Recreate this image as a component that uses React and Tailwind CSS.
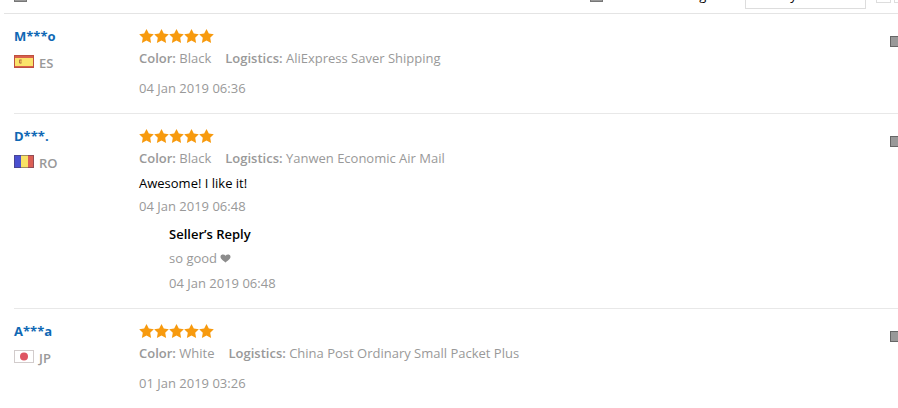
import { ChevronLeft, ChevronRight } from 'lucide-react'

const reviews = [
  {
    name: 'M***o',
    country: 'ES',
    color: 'Black',
    logistics: 'AliExpress Saver Shipping',
    date: '04 Jan 2019 06:36',
  },
  {
    name: 'D***.',
    country: 'RO',
    color: 'Black',
    logistics: 'Yanwen Economic Air Mail',
    comment: 'Awesome! I like it!',
    date: '04 Jan 2019 06:48',
    reply: { text: 'so good', date: '04 Jan 2019 06:48' },
  },
  {
    name: 'A***a',
    country: 'JP',
    color: 'White',
    logistics: 'China Post Ordinary Small Packet Plus',
    date: '01 Jan 2019 03:26',
  },
]

function Flag({ country }) {
  return (
    <svg viewBox="0 0 20 13" className="h-[13px] w-5 shrink-0" aria-hidden="true">
      {country === 'ES' && (
        <>
          <rect width="20" height="13" fill="#d9604c" />
          <rect x="1" y="3" width="18" height="8" fill="#fbe36a" />
          <path d="M5 4.500h3v3l-1.500 1.500L5 7.500z" fill="#e6b85a" />
          <path d="M7.500 5h-2v3h2" fill="none" stroke="#b0633c" strokeWidth="0.8" />
          <rect x="0.5" y="0.5" width="19" height="12" fill="none" stroke="#a3402f" strokeOpacity="0.5" />
        </>
      )}
      {country === 'RO' && (
        <>
          <rect width="7" height="13" fill="#4a50d0" />
          <rect x="7" width="7" height="13" fill="#f8e265" />
          <rect x="14" width="6" height="13" fill="#db5f55" />
          <rect x="0.5" y="0.5" width="19" height="12" fill="none" stroke="#4a3a58" strokeOpacity="0.5" />
        </>
      )}
      {country === 'JP' && (
        <>
          <rect x="0.5" y="0.5" width="19" height="12" fill="#fff" stroke="#d2cccc" />
          <circle cx="10" cy="6.5" r="4" fill="#de5563" />
        </>
      )}
    </svg>
  )
}

function Stars() {
  return (
    <div className="flex h-[22px] items-center" role="img" aria-label="5 out of 5 stars">
      {[1, 2, 3, 4, 5].map((n) => (
        <svg key={n} viewBox="0 0 15 15" className="size-[15px]" fill="#f79a0e">
          <path d="M7.500 0l2.300 4.600 5 .7-3.600 3.500.9 5.100-4.600-2.500-4.600 2.500.9-5.100L.2 5.300l5-.7z" />
        </svg>
      ))}
    </div>
  )
}

function Review({ review }) {
  const { name, country, color, logistics, comment, date, reply } = review

  return (
    <li className="flex border-b border-[#e8e8e8] pt-[11px] pb-[14px] last:border-b-0">
      <div className="w-[125px] shrink-0">
        <a href="#profile" className="block font-bold text-[#0f68b4]">{name}</a>
        <div className="mt-[2px] flex items-center gap-[5px]">
          <Flag country={country} />
          <b className="pt-[3px] font-semibold">{country}</b>
        </div>
      </div>

      <div className="min-w-0 flex-1">
        <Stars />
        <div className="flex gap-[14px]">
          <span><b className="font-semibold">Color:</b> {color}</span>
          <span><b className="font-semibold">Logistics:</b> {logistics}</span>
        </div>
        {comment && <p className="mt-[3px] text-black">{comment}</p>}
        <p className={comment ? 'mt-px' : 'mt-2'}>{date}</p>
        {reply && (
          <div className="mt-[6px] pl-[30px]">
            <h3 className="font-semibold text-black">Seller’s Reply</h3>
            <p className="mt-[2px] flex items-center gap-[3px]">
              {reply.text}
              <svg viewBox="0 0 11 9" className="h-[9px] w-[11px]" fill="#8c8c8c" aria-label="heart">
                <path d="M5.500 8.500C4 7 .5 5.200.5 2.700.5 1.300 1.600.5 2.900.5c1.100 0 2 .4 2.600 1.200C6.100.9 7 .5 8.100.5c1.300 0 2.400.8 2.400 2.200C10.500 5.200 7 7 5.500 8.500z" />
              </svg>
            </p>
            <p className="mt-[3px]">{reply.date}</p>
          </div>
        )}
      </div>

      <button type="button" aria-label="Helpful" className="mt-[11px] -mr-1 h-[11px] w-3 shrink-0 border border-[#666] bg-[#999]" />
    </li>
  )
}

export default function App() {
  return (
    <div className="min-h-screen overflow-hidden bg-white font-['Open_Sans',sans-serif] text-[13px] leading-[22px] text-[#999]">
      <div className="ml-1 flex h-[14px] items-end overflow-hidden border-b border-[#e4e4e4] pb-1 pl-[10px]">
        <div className="flex h-7 flex-1 items-center text-black">
          <input type="checkbox" aria-label="With pictures" className="size-[13px] appearance-none border border-[#777] bg-[#999]" />
          <label className="mr-[18px] ml-auto flex items-center gap-[6px]">
            <input type="checkbox" className="size-[13px] appearance-none border border-[#777] bg-[#999]" />
            Translate to English
          </label>
          <select aria-label="Sort reviews" className="h-7 w-[121px] appearance-none border border-[#ddd] bg-white px-2">
            <option>Sort by default</option>
          </select>
          <button type="button" aria-label="Previous page" className="ml-[10px] flex size-[15px] items-center justify-center border border-[#ddd]">
            <ChevronLeft className="size-2" />
          </button>
          <button type="button" aria-label="Next page" className="-mr-[11px] ml-[3px] flex size-[15px] items-center justify-center border border-[#ddd]">
            <ChevronRight className="size-2" />
          </button>
        </div>
      </div>

      <ul className="pl-[14px]">
        {reviews.map((review) => (
          <Review key={review.name} review={review} />
        ))}
      </ul>
    </div>
  )
}
